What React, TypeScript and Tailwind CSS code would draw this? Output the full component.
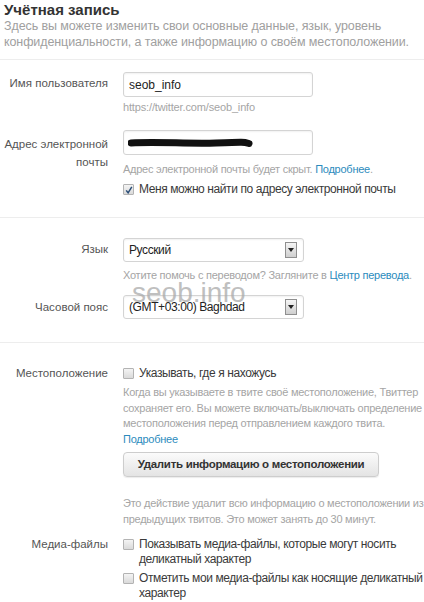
import type { ReactNode } from "react";

const FONT = { fontFamily: '"Liberation Sans", Arial, sans-serif' };

// label column on the left, controls start at x=123
function Row({ label, children, className = "" }: { label: ReactNode; children: ReactNode; className?: string }) {
  return (
    <div className={`flex ${className}`}>
      <div className="w-[108px] shrink-0 whitespace-nowrap text-right text-[11.5px] text-[#555]">{label}</div>
      <div className="ml-[15px] w-[320px] shrink-0">{children}</div>
    </div>
  );
}

function Checkbox({ checked = false, className = "" }: { checked?: boolean; className?: string }) {
  return (
    <span
      className={`flex h-[11px] w-[11px] shrink-0 items-center justify-center rounded-[1px] border border-[#b3b3b3] bg-gradient-to-b from-[#f4f4f4] to-[#dadada] ${className}`}
    >
      {checked && (
        <svg width="8" height="8" viewBox="0 0 8 8">
          <path d="M1.2 4.4 L3.1 6.8 L6.8 0.8" fill="none" stroke="#2c4f78" strokeWidth="1.5" />
        </svg>
      )}
    </span>
  );
}

function Select({ value }: { value: string }) {
  return (
    <div className="flex h-[24px] w-[181px] items-center justify-between rounded-[3px] border border-[#d4d4d4] bg-white pl-[5px] pr-[6px] shadow-[inset_0_1px_2px_rgba(0,0,0,0.06)]">
      <span className="text-[12px] tracking-[-0.4px] text-[#222]">{value}</span>
      <span className="flex h-[16px] w-[12px] items-center justify-center border border-[#8f8f8f] bg-gradient-to-b from-[#f5f5f5] to-[#cfcfcf]">
        <svg width="6" height="4" viewBox="0 0 6 4">
          <path d="M0 0 H6 L3 4 Z" fill="#222" />
        </svg>
      </span>
    </div>
  );
}

const hint = "text-[11px] tracking-[-0.25px] text-[#a5a5a5]";
const link = "text-[#2b8bbd]";
const check = "text-[12px] tracking-[-0.4px] text-[#3a3a3a]";

export default function App() {
  return (
    <div className="relative h-[602px] w-[424px] overflow-hidden bg-white" style={FONT}>
      <div className="px-[4px] pt-[3px]">
        <h1 className="text-[15px] font-bold leading-[14px] text-[#333]">Учётная запись</h1>
        <p className="mt-[1px] text-[12.5px] leading-[16px] tracking-[-0.1px] text-[#a0a0a0]">
          Здесь вы можете изменить свои основные данные, язык, уровень
          <br />
          конфиденциальности, а также информацию о своём местоположении.
        </p>
      </div>
      <div className="mt-[9px] h-px bg-[#ededed]" />

      <Row label={<span className="block leading-[22px]">Имя пользователя</span>} className="mt-[12px]">
        <div className="flex h-[25px] w-[190px] items-center rounded-[3px] border border-[#d4d4d4] px-[5px] text-[12px] text-[#222] shadow-[inset_0_1px_2px_rgba(0,0,0,0.06)]">
          seob_info
        </div>
        <div className={`mt-[2px] text-[11px] leading-[16px] tracking-[-0.15px] text-[#a5a5a5]`}>https://twitter.com/seob_info</div>
      </Row>

      <Row
        label={
          <span className="block pt-[5px] leading-[18px]">
            Адрес электронной
            <br />
            почты
          </span>
        }
        className="mt-[15px]"
      >
        <div className="flex h-[25px] w-[190px] items-center rounded-[3px] border border-[#d4d4d4] px-[4px] shadow-[inset_0_1px_2px_rgba(0,0,0,0.06)]">
          <svg width="126" height="10" viewBox="0 0 126 10">
            <path d="M3 5 C30 3.5 60 6 88 5 S116 4 121 5.5" fill="none" stroke="#111" strokeWidth="7" strokeLinecap="round" />
          </svg>
        </div>
        <div className={`mt-[6px] leading-[16px] ${hint}`}>
          Адрес электронной почты будет скрыт. <span className={link}>Подробнее</span>.
        </div>
        <label className={`mt-[4px] flex items-start gap-[5px] leading-[16px] ${check}`}>
          <Checkbox checked className="mt-[3px]" />
          Меня можно найти по адресу электронной почты
        </label>
      </Row>

      <div className="mt-[20px] h-px bg-[#ededed]" />

      <Row label={<span className="block leading-[22px]">Язык</span>} className="mt-[20px]">
        <Select value="Русский" />
        <div className={`mt-[5px] leading-[16px] ${hint}`}>
          Хотите помочь с переводом? Загляните в <span className={link}>Центр перевода</span>.
        </div>
      </Row>

      <Row label={<span className="block leading-[24px]">Часовой пояс</span>} className="mt-[12px]">
        <Select value="(GMT+03:00) Baghdad" />
      </Row>

      <div className="mt-[23px] h-px bg-[#ededed]" />

      <Row label={<span className="block leading-[16px]">Местоположение</span>} className="mt-[22px]">
        <label className={`flex items-start gap-[5px] leading-[16px] ${check}`}>
          <Checkbox className="mt-[3px]" />
          Указывать, где я нахожусь
        </label>
        <p className={`mt-[4px] whitespace-nowrap leading-[15.5px] ${hint}`}>
          Когда вы указываете в твите своё местоположение, Твиттер
          <br />
          сохраняет его. Вы можете включать/выключать определение
          <br />
          местоположения перед отправлением каждого твита.
        </p>
        <div className={`text-[11px] leading-[15.5px] tracking-[-0.25px] ${link}`}>Подробнее</div>
        <button className="mt-[5px] h-[25px] w-[256px] whitespace-nowrap rounded-[4px] border border-[#cdcdcd] bg-gradient-to-b from-[#fbfbfb] to-[#e4e4e4] text-[11.5px] font-bold tracking-[-0.3px] text-[#333] shadow-[0_1px_1px_rgba(0,0,0,0.08)]">
          Удалить информацию о местоположении
        </button>
        <p className={`mt-[19px] whitespace-nowrap leading-[15.5px] ${hint}`}>
          Это действие удалит всю информацию о местоположении из
          <br />
          предыдущих твитов. Это может занять до 30 минут.
        </p>
      </Row>

      <Row label={<span className="block leading-[15px]">Медиа-файлы</span>} className="mt-[10px]">
        <label className={`flex items-start gap-[5px] leading-[15px] ${check}`}>
          <Checkbox className="mt-[2px]" />
          <span>
            Показывать медиа-файлы, которые могут носить
            <br />
            деликатный характер
          </span>
        </label>
        <label className={`mt-[4px] flex items-start gap-[5px] leading-[15px] ${check}`}>
          <Checkbox className="mt-[2px]" />
          <span>
            Отметить мои медиа-файлы как носящие деликатный
            <br />
            характер
          </span>
        </label>
      </Row>

      {/* watermark */}
      <div className="pointer-events-none absolute left-[132px] top-[278px] text-[28px] leading-[30px] text-[#aaa] opacity-75">
        seob.info
      </div>
    </div>
  );
}
